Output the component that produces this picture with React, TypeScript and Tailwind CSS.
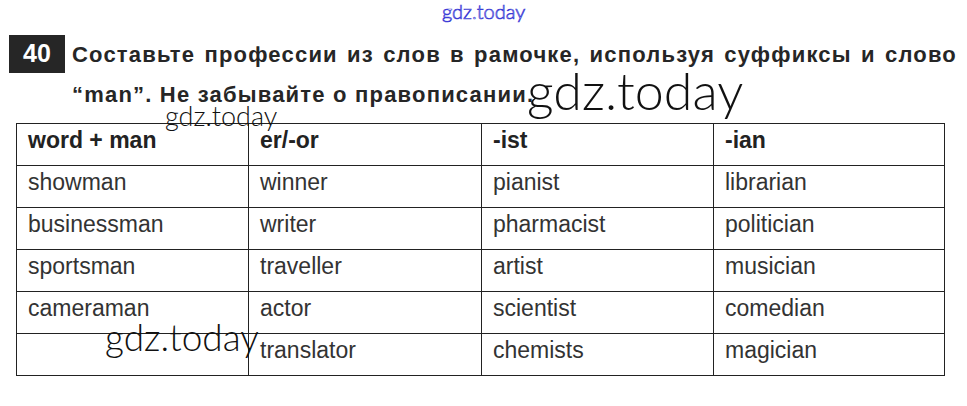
import React from 'react';

// Table content: one row per line, columns follow the header
const headers = ['word + man', 'er/-or', '-ist', '-ian'];

const rows: string[][] = [
  ['showman', 'winner', 'pianist', 'librarian'],
  ['businessman', 'writer', 'pharmacist', 'politician'],
  ['sportsman', 'traveller', 'artist', 'musician'],
  ['cameraman', 'actor', 'scientist', 'comedian'],
  ['', 'translator', 'chemists', 'magician'],
];

const colWidths = ['w-[232px]', 'w-[233px]', 'w-[232px]', 'w-[231px]'];

const Watermark: React.FC<{ className: string }> = ({ className }) => (
  <span
    className={`pointer-events-none absolute whitespace-nowrap font-['Lato','Noto_Sans',sans-serif] font-light leading-none ${className}`}
  >
    gdz.today
  </span>
);

const App: React.FC = () => {
  return (
    <div className="relative h-[406px] w-[967px] overflow-hidden bg-white font-['Liberation_Sans',Arial,sans-serif] text-[#222]">
      {/* outlined site mark at the top */}
      <Watermark className="left-[442px] top-[1px] text-[20px] text-transparent [-webkit-text-stroke:0.7px_#3b3bd6]" />

      {/* task heading */}
      <div className="flex pl-[9px] pt-[35px]">
        <div className="flex h-[38px] w-[56px] shrink-0 items-center justify-center bg-[#262626] text-[25px] font-bold text-white">
          40
        </div>
        <div className="ml-[7px] w-[885px] text-[22px] font-bold leading-[40px] tracking-[1.2px] text-[#262626]">
          <p className="text-justify [text-align-last:justify]">
            Составьте профессии из слов в рамочке, используя суффиксы и слово
          </p>
          <p>“man”. Не забывайте о правописании.</p>
        </div>
      </div>

      {/* answer table */}
      <table className="ml-[16px] mt-[8px] table-fixed border-collapse text-[23px] leading-[26px] text-[#333]">
        <thead>
          <tr>
            {headers.map((h, i) => (
              <th
                key={h}
                className={`${colWidths[i]} h-[42px] border border-[#222] px-[11px] pt-[3px] text-left align-top font-bold text-[#222]`}
              >
                {h}
              </th>
            ))}
          </tr>
        </thead>
        <tbody>
          {rows.map((row, r) => (
            <tr key={r}>
              {row.map((cell, c) => (
                <td
                  key={c}
                  className="h-[42px] border border-[#222] px-[11px] pt-[3px] align-top"
                >
                  {cell}
                </td>
              ))}
            </tr>
          ))}
        </tbody>
      </table>

      {/* watermarks lying over the page */}
      <Watermark className="left-[527px] top-[64px] text-[52px] text-[#111]" />
      <Watermark className="left-[165px] top-[102px] text-[27px] text-[#111]" />
      <Watermark className="left-[105px] top-[318px] text-[37px] text-[#111]" />
    </div>
  );
};

export default App;
